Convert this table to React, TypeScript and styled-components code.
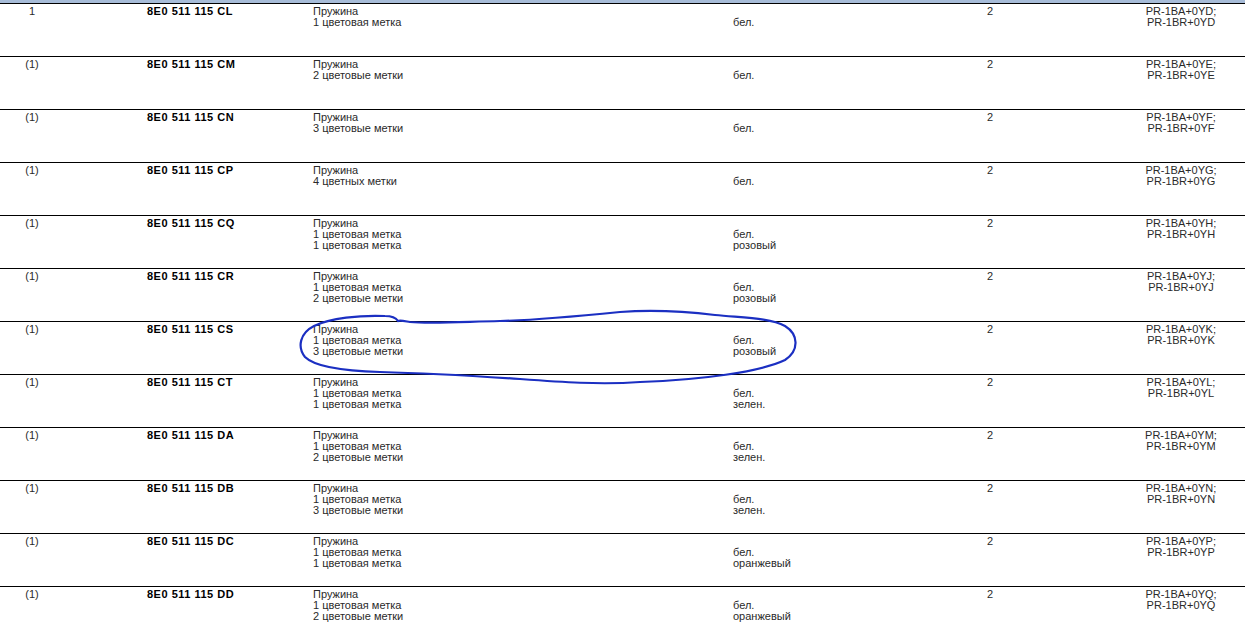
import React from "react";
import styled, { createGlobalStyle } from "styled-components";

const Global = createGlobalStyle`
  html, body { margin: 0; padding: 0; background: #fff; overflow: hidden; }
  body { font-family: "Liberation Sans", Arial, sans-serif; }
`;

const Page = styled.div`
  position: relative;
  width: 1245px;
  height: 631px;
  overflow: hidden;
  background: #fff;
`;

const TopBand = styled.div`
  height: 3px;
  background: #a7bcd8;
`;

const Row = styled.div`
  display: grid;
  grid-template-columns: 64px 249px 420px 207px 100px 205px;
  height: 52px;
  border-top: 1px solid #000;
  font-size: 11px;
  line-height: 11px;
  color: #2a2a2a;
`;

const Cell = styled.div<{ $align?: "left" | "center"; $pad?: number; $bold?: boolean }>`
  padding-top: 2px;
  padding-left: ${(p) => p.$pad ?? 0}px;
  text-align: ${(p) => p.$align ?? "left"};
  font-weight: ${(p) => (p.$bold ? 700 : 400)};
  letter-spacing: ${(p) => (p.$bold ? "0.5px" : "0")};
  color: ${(p) => (p.$bold ? "#000" : "inherit")};
  white-space: pre;
`;

const Line = styled.div`
  height: 11px;
`;

const Overlay = styled.svg`
  position: absolute;
  left: 0;
  top: 0;
  pointer-events: none;
`;

type Item = {
  pos: string;
  part: string;
  desc: string[];
  colors: string[];
  code: string;
};

const rows: Item[] = [
  { pos: "1", part: "8E0 511 115 CL", desc: ["Пружина", "1 цветовая метка"], colors: ["бел."], code: "0YD" },
  { pos: "(1)", part: "8E0 511 115 CM", desc: ["Пружина", "2 цветовые метки"], colors: ["бел."], code: "0YE" },
  { pos: "(1)", part: "8E0 511 115 CN", desc: ["Пружина", "3 цветовые метки"], colors: ["бел."], code: "0YF" },
  { pos: "(1)", part: "8E0 511 115 CP", desc: ["Пружина", "4 цветных метки"], colors: ["бел."], code: "0YG" },
  { pos: "(1)", part: "8E0 511 115 CQ", desc: ["Пружина", "1 цветовая метка", "1 цветовая метка"], colors: ["бел.", "розовый"], code: "0YH" },
  { pos: "(1)", part: "8E0 511 115 CR", desc: ["Пружина", "1 цветовая метка", "2 цветовые метки"], colors: ["бел.", "розовый"], code: "0YJ" },
  { pos: "(1)", part: "8E0 511 115 CS", desc: ["Пружина", "1 цветовая метка", "3 цветовые метки"], colors: ["бел.", "розовый"], code: "0YK" },
  { pos: "(1)", part: "8E0 511 115 CT", desc: ["Пружина", "1 цветовая метка", "1 цветовая метка"], colors: ["бел.", "зелен."], code: "0YL" },
  { pos: "(1)", part: "8E0 511 115 DA", desc: ["Пружина", "1 цветовая метка", "2 цветовые метки"], colors: ["бел.", "зелен."], code: "0YM" },
  { pos: "(1)", part: "8E0 511 115 DB", desc: ["Пружина", "1 цветовая метка", "3 цветовые метки"], colors: ["бел.", "зелен."], code: "0YN" },
  { pos: "(1)", part: "8E0 511 115 DC", desc: ["Пружина", "1 цветовая метка", "1 цветовая метка"], colors: ["бел.", "оранжевый"], code: "0YP" },
  { pos: "(1)", part: "8E0 511 115 DD", desc: ["Пружина", "1 цветовая метка", "2 цветовые метки"], colors: ["бел.", "оранжевый"], code: "0YQ" },
];

export default function App() {
  return (
    <Page>
      <Global />
      <TopBand />
      {rows.map((r) => (
        <Row key={r.part}>
          <Cell $align="center">{r.pos}</Cell>
          <Cell $pad={83} $bold>{r.part}</Cell>
          <Cell>
            {r.desc.map((d, i) => (
              <Line key={i}>{d}</Line>
            ))}
          </Cell>
          <Cell>
            <Line />
            {r.colors.map((c, i) => (
              <Line key={i}>{c}</Line>
            ))}
          </Cell>
          <Cell $align="center">2</Cell>
          <Cell $align="center" $pad={77}>
            <Line>{`PR-1BA+${r.code};`}</Line>
            <Line>{`PR-1BR+${r.code}`}</Line>
          </Cell>
        </Row>
      ))}
      <Overlay width="1245" height="631" viewBox="0 0 1245 631">
        <path
          d="M398 321 C396 318 392 316 385 316 C360 315 330 318 314 326 C300 333 297 347 305 357 C315 367 345 371 380 372 C420 373 460 375 520 379 C560 382 600 385 640 382 C700 380 760 372 785 360 C800 350 798 334 785 326 C770 318 745 318 715 315 C690 312 660 309 620 312 C580 316 540 320 500 321 C460 322 430 324 410 322 C404 321 400 320 398 321"
          fill="none"
          stroke="#1b2fc2"
          strokeWidth="2.2"
          strokeLinecap="round"
          strokeLinejoin="round"
        />
      </Overlay>
    </Page>
  );
}
